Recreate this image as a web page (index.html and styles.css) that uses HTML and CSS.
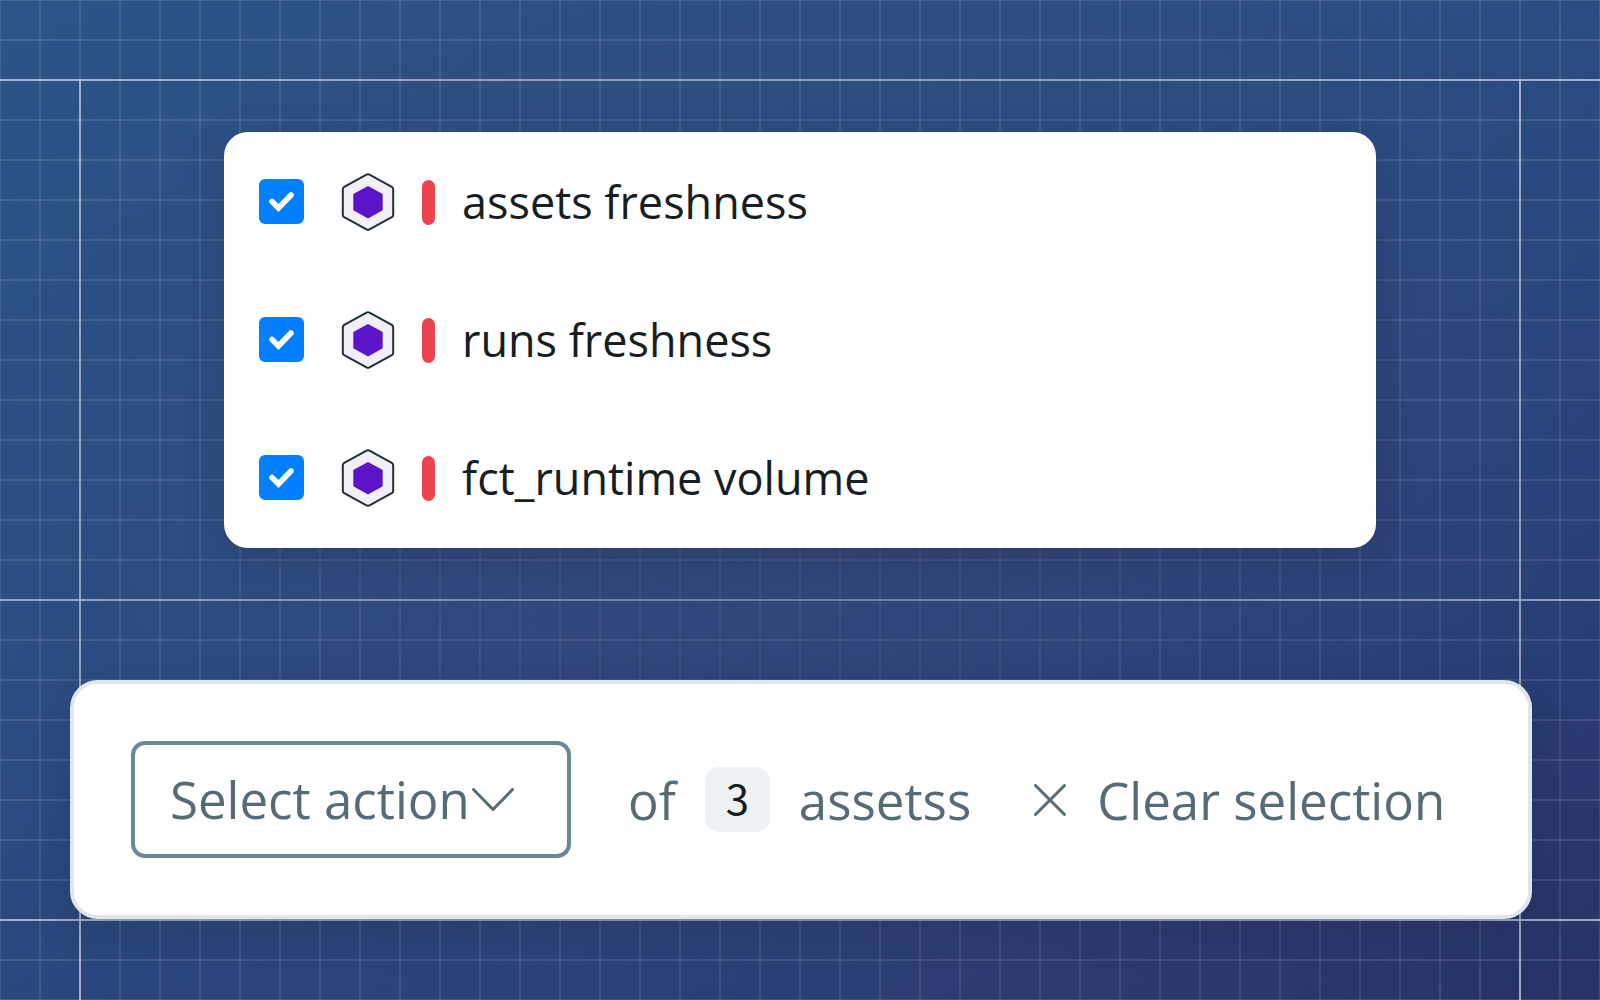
FILE: index.html
```html
<!DOCTYPE html>
<html lang="en">
<head>
<meta charset="UTF-8">
<meta name="viewport" content="width=device-width, initial-scale=1.0">
<title>Bulk actions</title>
<link rel="stylesheet" href="styles.css">
</head>
<body>

<!-- shared icons -->
<svg class="sprite" aria-hidden="true">
  <symbol id="check" viewBox="0 0 45 45">
    <path d="M13 22.500l6.500 6.500L32 16" fill="none" stroke="#fff" stroke-width="5.500" stroke-linecap="round" stroke-linejoin="miter"/>
  </symbol>
  <symbol id="hexagon" viewBox="0 0 54 58">
    <path d="M25.500 1.600Q27 .8 28.500 1.600L50.800 13.800Q52.200 14.700 52.200 16.300V41.700Q52.200 43.300 50.800 44.200L28.500 56.400Q27 57.200 25.500 56.400L3.200 44.200Q1.800 43.300 1.800 41.700V16.300Q1.800 14.700 3.200 13.800Z" fill="#f1eef6" stroke="#223036" stroke-width="2"/>
    <path d="M27 13L41.700 21V37.200L27 45.500L12.300 37.200V21Z" fill="#5b14c8"/>
  </symbol>
</svg>

<main class="page">
  <ul class="monitors">
    <li>
      <label class="monitor">
        <span class="checkbox">
          <input type="checkbox" checked>
          <svg><use href="#check"/></svg>
        </span>
        <svg class="hexagon"><use href="#hexagon"/></svg>
        <span class="severity"></span>
        <span>assets freshness</span>
      </label>
    </li>
    <li>
      <label class="monitor">
        <span class="checkbox">
          <input type="checkbox" checked>
          <svg><use href="#check"/></svg>
        </span>
        <svg class="hexagon"><use href="#hexagon"/></svg>
        <span class="severity"></span>
        <span>runs freshness</span>
      </label>
    </li>
    <li>
      <label class="monitor">
        <span class="checkbox">
          <input type="checkbox" checked>
          <svg><use href="#check"/></svg>
        </span>
        <svg class="hexagon"><use href="#hexagon"/></svg>
        <span class="severity"></span>
        <span>fct_runtime volume</span>
      </label>
    </li>
  </ul>

  <form class="action-bar" onsubmit="return false;">
    <div class="select">
      <select aria-label="Action">
        <option>Select action</option>
      </select>
      <svg class="chevron" viewBox="0 0 42 24">
        <path d="M1.500 1.500L21 21.500L40.500 1.500"/>
      </svg>
    </div>
    <div class="summary">
      <span>of</span>
      <span class="count">3</span>
      <span>assetss</span>
    </div>
    <button type="button" class="clear">
      <svg class="cross" viewBox="0 0 32 32">
        <path d="M1.500 1.500L30.500 30.500M30.500 1.500L1.500 30.500"/>
      </svg>
      <span>Clear selection</span>
    </button>
  </form>
</main>

</body>
</html>
```
FILE: styles.css
```css
* {
  box-sizing: border-box;
}

body {
  margin: 0;
  min-height: 100vh;
  position: relative;
  font-family: "Open Sans", "Noto Sans", sans-serif;
  color: #161e22;
  background:
    radial-gradient(ellipse 55% 75% at 50% 50%, rgba(62, 68, 116, 0.45), rgba(62, 68, 116, 0)),
    linear-gradient(155deg, #2b5487 0%, #2b4d82 40%, #29427a 70%, #273266 100%);
}

/* blueprint grid, weaker towards the middle */
body::before {
  content: "";
  position: absolute;
  inset: 0;
  background:
    linear-gradient(#fffc, #fffc) 0 79px / 100% 2px no-repeat,
    linear-gradient(#fffc, #fffc) 0 599px / 100% 2px no-repeat,
    linear-gradient(#fffc, #fffc) 0 919px / 100% 2px no-repeat,
    linear-gradient(#fffc, #fffc) left 79px top 80px / 2px 100% no-repeat,
    linear-gradient(#fffc, #fffc) right 79px top 80px / 2px 100% no-repeat,
    linear-gradient(#ffffff29 2px, transparent 2px) -1px -1px / 40px 40px,
    linear-gradient(90deg, #ffffff29 2px, transparent 2px) -1px -1px / 40px 40px;
  mask-image: radial-gradient(ellipse at center, rgba(0, 0, 0, 0.3), rgba(0, 0, 0, 0.72));
}

.sprite {
  position: absolute;
  width: 0;
  height: 0;
}

.page {
  position: relative;
  padding: 132px 68px 80px 70px;
}

.monitors {
  width: 79%;
  max-width: 1152px;
  margin: 0 auto;
  padding: 1px 35px;
  position: relative;
  left: -1px;
  list-style: none;
  background: #fff;
  border-radius: 24px;
  box-shadow: 0 12px 40px rgba(30, 34, 50, 0.2);
}

.monitor {
  display: flex;
  align-items: center;
  padding: 38px 0;
  font-size: 45px;
  line-height: 62px;
}

.checkbox {
  display: grid;
  margin-right: 37px;
  padding-bottom: 2px;
}

.checkbox input,
.checkbox svg {
  grid-area: 1 / 1;
  width: 45px;
  height: 45px;
  margin: 0;
}

.checkbox input {
  appearance: none;
  border-radius: 6px;
  border: 2px solid #0080ff;
}

.checkbox input:checked {
  background: #0080ff;
}

.checkbox svg {
  pointer-events: none;
}

.hexagon {
  width: 54px;
  height: 58px;
}

.severity {
  width: 13px;
  height: 45px;
  margin: 0 27px;
  border-radius: 7px;
  background: #ee434f;
}

.action-bar {
  display: flex;
  align-items: center;
  margin-top: 132px;
  padding: 57px;
  background: #fff;
  border: 4px solid #e1e6ea;
  border-radius: 28px;
  box-shadow: 0 12px 40px rgba(30, 34, 50, 0.2);
  color: #566b76;
  font-size: 51px;
  line-height: 70px;
}

.select {
  display: grid;
  align-items: center;
  width: 440px;
}

.select select,
.chevron {
  grid-area: 1 / 1;
}

.select select {
  appearance: none;
  height: 117px;
  padding: 0 35px 2px;
  border: 4px solid #6b8896;
  border-radius: 14px;
  background: #fff;
  color: inherit;
  font: inherit;
}

.chevron {
  width: 42px;
  height: 24px;
  justify-self: end;
  margin-right: 57px;
  pointer-events: none;
}

.chevron path,
.cross path {
  fill: none;
  stroke: #566b76;
  stroke-width: 3;
  stroke-linecap: round;
  stroke-linejoin: round;
}

.summary {
  display: flex;
  align-items: center;
  gap: 29px;
  margin-left: 57px;
}

.count {
  min-width: 65px;
  padding-bottom: 5px;
  border-radius: 14px;
  background: #eef2f4;
  color: #161e22;
  font-family: "Noto Sans CJK SC", sans-serif;
  font-size: 42px;
  line-height: 60px;
  text-align: center;
}

.clear {
  display: flex;
  align-items: center;
  gap: 31px;
  margin-left: 63px;
  padding: 0;
  border: 0;
  background: none;
  color: inherit;
  font: inherit;
  white-space: nowrap;
  cursor: pointer;
}

.cross {
  width: 32px;
  height: 32px;
}
```
